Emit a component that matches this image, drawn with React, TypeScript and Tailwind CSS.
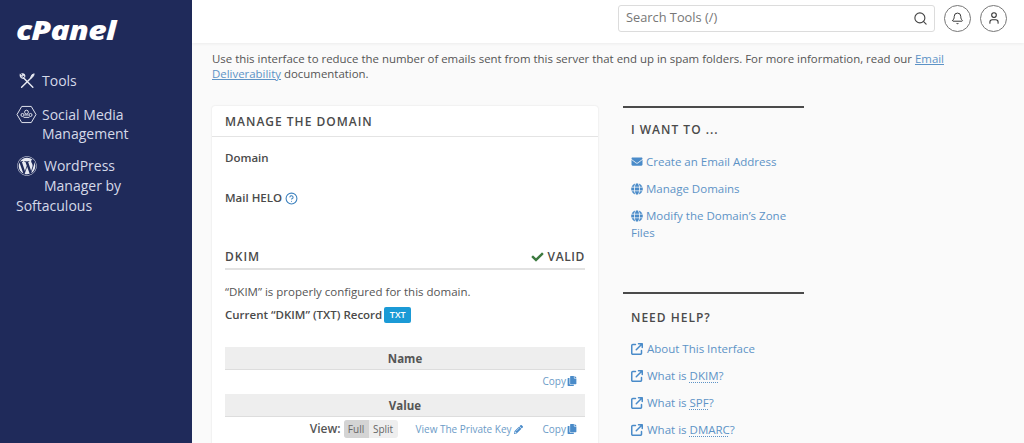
import { Search, Bell, User } from 'lucide-react';
import { FaCheck, FaEnvelope, FaGlobe, FaPencilAlt, FaCopy, FaWordpress } from 'react-icons/fa';
import { LuCircleHelp } from 'react-icons/lu';
import { FaArrowUpRightFromSquare } from 'react-icons/fa6';

const font = 'font-["Open_Sans",sans-serif]';

function ToolsIcon() {
    return (
        <svg viewBox="0 0 20 20" className="h-[18px] w-[18px] shrink-0" fill="none" stroke="#e8eaf2" strokeWidth="1.6" strokeLinecap="round">
            <path d="M4 17 L15 6" />
            <path d="M14 6 L15.5 3 L18 2 L17.2 4.6 L15 6.5" fill="#e8eaf2" strokeWidth="1" />
            <path d="M16.5 17 L6 6.5" />
            <path d="M6 7 C3.5 7 2 5 2.5 3 L4.5 4.8 L6 3.6 L4.6 2 C6.8 1.6 8 3.6 7.4 5.6" strokeWidth="1.3" />
        </svg>
    );
}

function SocialIcon() {
    return (
        <svg viewBox="0 0 22 20" className="h-[19px] w-[21px] shrink-0" fill="none" stroke="#e8eaf2" strokeWidth="1">
            <path d="M6 1.5 H16 L21 10 L16 18.5 H6 L1 10 Z" />
            <circle cx="11" cy="7.5" r="2" />
            <circle cx="6.8" cy="10.5" r="1.6" />
            <circle cx="15.2" cy="10.5" r="1.6" />
            <path d="M8 13 H14 M9 10.5 H13" />
        </svg>
    );
}

function Sidebar() {
    return (
        <aside className="flex w-[192px] shrink-0 flex-col bg-[#1f2a5a] pl-4 text-[14px] leading-[19.5px] text-[#d5d9e8]">
            <div className="mt-[14px] h-[31px] origin-left scale-x-[1.18] text-[27px] leading-[31px] font-extrabold tracking-[-0.6px] text-white italic">cPanel</div>
            <div className="mt-[26px] flex items-center gap-[6px] pl-[2px]">
                <ToolsIcon />
                <span>Tools</span>
            </div>
            <div className="mt-[14px]">
                <div className="flex items-center gap-[5px]">
                    <SocialIcon />
                    <span>Social Media</span>
                </div>
                <div className="pl-[26px]">Management</div>
            </div>
            <div className="mt-[12.5px]">
                <div className="flex items-center gap-[7px] pl-[1px]">
                    <FaWordpress className="h-5 w-5 shrink-0 text-[#e8eaf2]" />
                    <span>WordPress</span>
                </div>
                <div className="pl-[28px]">Manager by</div>
                <div>Softaculous</div>
            </div>
        </aside>
    );
}

function Header() {
    return (
        <header className="flex h-[43px] shrink-0 items-center justify-end bg-white pr-[17px] pb-[7px] shadow-[0_1px_3px_rgba(0,0,0,0.06)]">
            <div className="flex h-[27px] w-[317px] items-center justify-between rounded-[3px] border border-[#dcdcdc] pr-[6px] pl-[7px] text-[12.8px] text-[#777]">
                <span>Search Tools (/)</span>
                <Search className="h-[15px] w-[15px] text-[#444]" strokeWidth={1.8} />
            </div>
            <div className="ml-[9px] flex h-[27px] w-[27px] items-center justify-center rounded-full border border-[#777]">
                <Bell className="h-[13px] w-[13px] text-[#333]" strokeWidth={1.8} />
            </div>
            <div className="ml-[9px] flex h-[27px] w-[27px] items-center justify-center rounded-full border border-[#777]">
                <User className="h-[14px] w-[14px] text-[#333]" strokeWidth={1.8} />
            </div>
        </header>
    );
}

function TableHead({ label }: { label: string }) {
    return (
        <div className="flex h-[23px] items-center justify-center border-b border-[#ddd] bg-[#eeeeee] pt-[1px] text-[11.5px] font-bold text-[#555]">
            {label}
        </div>
    );
}

function CopyLink() {
    return (
        <span className="flex items-center gap-[1px] text-[#6c9bc7]">
            Copy <FaCopy className="h-[10px] w-[10px] text-[#4a8bc9]" />
        </span>
    );
}

function ManagePanel() {
    return (
        <section className="h-[400px] w-[386px] shrink-0 rounded-t-[3px] bg-white shadow-[0_0_2px_rgba(0,0,0,0.12)]">
            <div className="flex h-[31px] items-center border-b border-[#e4e4e4] px-[13px] pt-[2px] text-[12px] font-semibold tracking-[1px] text-[#4a4a4a]">
                MANAGE THE DOMAIN
            </div>
            <div className="px-[13px] pt-[12px]">
                <div className="text-[11.5px] leading-[18px] font-semibold text-[#4a4a4a]">Domain</div>
                <div className="mt-[22px] flex items-center gap-[3px] text-[11.5px] leading-[18px] font-semibold text-[#4a4a4a]">
                    Mail HELO <LuCircleHelp className="h-[13px] w-[13px] text-[#3f83bf]" />
                </div>

                <div className="mt-[41px] flex h-[22px] items-start justify-between border-b-2 border-[#e2e2e2] text-[12px] leading-[18px] font-semibold tracking-[1px] text-[#4a4a4a]">
                    <span>DKIM</span>
                    <span className="flex items-center gap-[4px] tracking-[0.6px]">
                        <FaCheck className="h-[12px] w-[13px] text-[#3c7a3f]" />
                        VALID
                    </span>
                </div>
                <p className="mt-[13px] text-[11.5px] leading-[18px] text-[#555]">“DKIM” is properly configured for this domain.</p>
                <div className="mt-[5px] flex items-center gap-[2px] text-[11.5px] leading-[18px] font-semibold text-[#4a4a4a]">
                    Current “DKIM” (TXT) Record
                    <span className="flex h-[16px] w-[27px] items-center justify-center rounded-[2px] bg-[#1b9ad6] text-[9px] font-semibold text-white">TXT</span>
                </div>

                <div className="mt-[23px] text-[10px]">
                    <TableHead label="Name" />
                    <div className="flex h-[24px] items-center justify-end pr-[8px] pb-[2px]">
                        <CopyLink />
                    </div>
                    <TableHead label="Value" />
                    <div className="flex h-[26px] items-center justify-end pr-[8px] pb-[2px]">
                        <span className="mr-[3px] text-[12px] font-semibold text-[#555]">View:</span>
                        <span className="flex h-[18px] overflow-hidden rounded-[3px] bg-[#eeeeee] text-[#666]">
                            <span className="flex w-[25px] items-center justify-center bg-[#d4d4d4]">Full</span>
                            <span className="flex w-[29px] items-center justify-center">Split</span>
                        </span>
                        <span className="ml-[18px] flex items-center gap-[2px] text-[#6c9bc7]">
                            View The Private Key <FaPencilAlt className="h-[9px] w-[9px] text-[#4a8bc9]" />
                        </span>
                        <span className="ml-[20px]">
                            <CopyLink />
                        </span>
                    </div>
                </div>
            </div>
        </section>
    );
}

function SideLink({ icon, children }: { icon: React.ReactNode; children: React.ReactNode }) {
    return (
        <div className="text-[11.5px] leading-[17px] text-[#5d93c6]">
            {icon} {children}
        </div>
    );
}

function RightColumn() {
    const globe = <FaGlobe className="inline h-[12px] w-[12px] align-[-2px] text-[#4a8bc9]" />;
    const ext = <FaArrowUpRightFromSquare className="mr-[1px] inline h-[12px] w-[12px] align-[-2px] text-[#4a8bc9]" />;
    const abbr = 'underline decoration-dotted decoration-[#5d93c6] underline-offset-2';
    return (
        <div className="ml-[25px] w-[181px] shrink-0">
            <div className="border-t-2 border-[#4a4a4a] pl-[8px]">
                <h2 className="mt-[13px] text-[12px] leading-[18px] font-semibold tracking-[1px] text-[#4a4a4a]">I WANT TO ...</h2>
                <div className="mt-[14px] flex flex-col gap-[10px]">
                    <SideLink icon={<FaEnvelope className="inline h-[11px] w-[12px] align-[-1px] text-[#4a8bc9]" />}>Create an Email Address</SideLink>
                    <SideLink icon={globe}>Manage Domains</SideLink>
                    <SideLink icon={globe}>Modify the Domain’s Zone Files</SideLink>
                </div>
            </div>
            <div className="mt-[51px] border-t-2 border-[#4a4a4a] pl-[8px]">
                <h2 className="mt-[15px] text-[12px] leading-[18px] font-semibold tracking-[1px] text-[#4a4a4a]">NEED HELP?</h2>
                <div className="mt-[13px] flex flex-col gap-[10px]">
                    <SideLink icon={ext}>About This Interface</SideLink>
                    <SideLink icon={ext}>What is <span className={abbr}>DKIM</span>?</SideLink>
                    <SideLink icon={ext}>What is <span className={abbr}>SPF</span>?</SideLink>
                    <SideLink icon={ext}>What is <span className={abbr}>DMARC</span>?</SideLink>
                </div>
            </div>
        </div>
    );
}

export default function App() {
    return (
        <div className={`flex h-[443px] w-[1024px] overflow-hidden bg-[#fafafa] ${font}`}>
            <Sidebar />
            <div className="flex min-w-0 flex-1 flex-col">
                <Header />
                <main className="pt-[8px] pl-[20px]">
                    <p className="w-[760px] text-[11.43px] leading-[15px] text-[#555]">
                        Use this interface to reduce the number of emails sent from this server that end up in spam folders. For more information, read our{' '}
                        <a className="text-[#5d93c6] underline">Email</a>{' '}
                        <a className="text-[#5d93c6] underline">Deliverability</a> documentation.
                    </p>
                    <div className="mt-[25px] flex items-start">
                        <ManagePanel />
                        <RightColumn />
                    </div>
                </main>
            </div>
        </div>
    );
}
